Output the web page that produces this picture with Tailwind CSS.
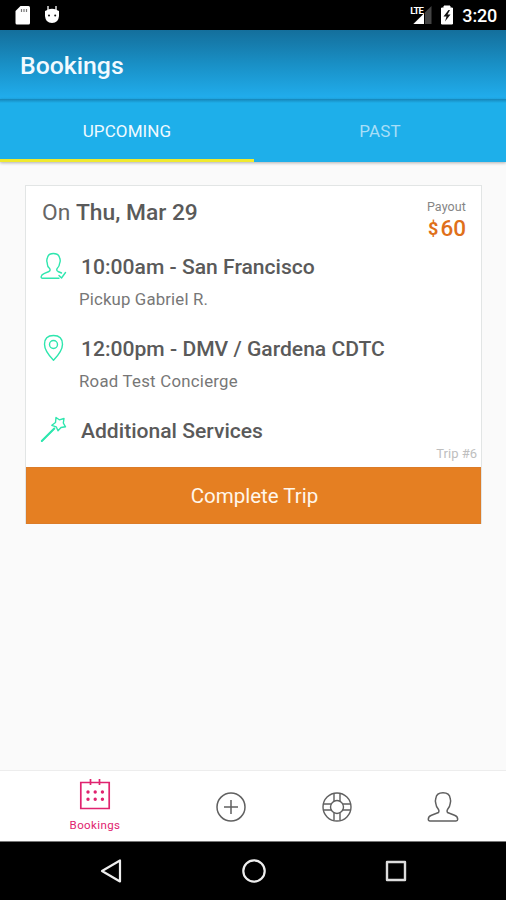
<!DOCTYPE html>
<html lang="en">
<head>
<meta charset="utf-8">
<title>Bookings</title>
<script src="https://cdn.jsdelivr.net/npm/@tailwindcss/browser@4"></script>
</head>
<body class="w-[506px] h-[900px] overflow-hidden bg-[#fafafa] font-[Roboto,sans-serif] flex flex-col whitespace-nowrap">
  <!-- Status bar -->
  <div class="h-[30px] shrink-0 bg-black flex items-center pl-[15px] pr-[9px] text-white">
    <svg class="w-4 h-5" viewBox="0 0 16 20"><path d="M5.500 1H13.500Q15 1 15 2.500V18Q15 19.500 13.500 19.500H2Q.5 19.500 .5 18V6Z" fill="#fff"/><path d="M6.500 4v3M9 4v3M11.500 4v3" stroke="#777" stroke-width="1.200"/></svg>
    <svg class="ml-[13px] w-4 h-5" viewBox="0 0 16 20"><path d="M4 1v5M12 1v5" stroke="#ddd" stroke-width="1.500"/><path d="M1 6Q3 5 4 4.500Q8 3 12 4.500Q13 5 15 6V11Q14.500 18 8 18Q1.500 18 1 11Z" fill="#fff"/><circle cx="5" cy="10.500" r="1" fill="#111"/><circle cx="11.200" cy="10.500" r="1" fill="#111"/></svg>
    <div class="ml-auto relative w-[24px] h-[20px]">
      <svg class="w-6 h-5" viewBox="0 0 24 20"><path d="M4 19 22.500 1V19Z" fill="#444"/><path d="M4.500 19 15.500 8V19Z" fill="#fff"/><path d="M15.500 7v12" stroke="#000"/></svg>
      <span class="absolute left-[1px] top-[1px] text-[9.5px] leading-[9px] font-bold tracking-[-0.9px]">LTE</span>
    </div>
    <svg class="ml-[7px] w-[14px] h-5" viewBox="0 0 14 20"><path d="M4 1h6v2h2.500v16h-11V3H4Z" fill="#fff" stroke="#fff" stroke-linejoin="round"/><path d="M8.500 5 3.500 11.500H6.500L5 16.500 10.500 9.500H7.500L10 5Z" fill="#111"/></svg>
    <span class="ml-[8px] pt-[2px] text-[18px] leading-[20px] font-medium tracking-[-0.2px]">3:20</span>
  </div>
  <!-- App bar -->
  <div class="h-[69px] shrink-0 bg-linear-to-b from-[#146f9c] via-[#1990c6] to-[#21aeee] flex items-center pl-[20px] pt-[3px]">
    <h1 class="text-[24.8px] leading-[28px] font-medium text-[#f2faff]">Bookings</h1>
  </div>
  <!-- Tabs -->
  <div class="relative h-[63px] shrink-0 bg-[#1eafea] flex text-[17px] shadow-[0_1px_3px_rgba(0,0,0,0.3)]">
    <div class="absolute inset-x-0 top-0 h-[4px] bg-linear-to-b from-[#1685b8] to-[#1eafea]"></div>
    <div class="w-[254px] h-full border-b-[3px] border-[#f0e92e] flex items-center justify-center pt-[6px] text-[#f0faff] tracking-[0.1px]">UPCOMING</div>
    <div class="w-[252px] h-full flex items-center justify-center pt-[3px] text-[#a7def7] tracking-[0.1px]">PAST</div>
  </div>
  <!-- Booking list -->
  <main class="flex-1 pt-[23px] px-[25px]">
    <section class="w-[457px] h-[339px] bg-white border border-b-0 border-[#e2e5e5] flex flex-col text-[#5a5a5a]">
      <div class="h-[56px] flex justify-between pl-[16px] pr-[15px]">
        <h2 class="pt-[13px] text-[22.8px] leading-[28px] text-[#666]">On <b class="font-medium text-[#5a5a5a]">Thu, Mar 29</b></h2>
        <div class="pt-[13px] text-right">
          <div class="text-[12.5px] leading-[15px] text-[#858585] tracking-[0.1px]">Payout</div>
          <div class="text-[22.5px] leading-[28px] text-[#df701a] font-medium"><span class="text-[18px] font-bold mr-[2px] relative -top-px">$</span>60</div>
        </div>
      </div>
      <div class="h-[82px] flex pl-[14px] pt-[10px]">
        <svg class="w-[27px] h-[28px] shrink-0" viewBox="0 0 27 28" fill="none" stroke="#2ee6ae" stroke-width="1.400" stroke-linecap="round" stroke-linejoin="round"><path d="M19 26.300H2.500Q1 26.300 1.200 24.500Q1.500 22.500 4.500 21.300L9 19.500Q10.600 18.500 9.800 16.800Q7 14.500 7.300 11Q6.300 9 7.200 6.500Q8 1.500 13.300 1.500Q19 1.500 19.800 6.500Q20.700 9 19.700 11Q19.500 14.500 17 16.800Q16.200 18.500 18 19.500L21.500 21M19 23.500 21.500 26 25.500 20.500"/></svg>
        <div class="pl-[12px]">
          <h3 class="pl-[2px] pt-px text-[21.1px] leading-[28px] font-medium">10:00am - San Francisco</h3>
          <p class="pt-[7px] text-[16.8px] tracking-[0.15px] leading-[22px] text-[#777]">Pickup Gabriel R.</p>
        </div>
      </div>
      <div class="h-[82px] flex pl-[14px] pt-[10px]">
        <svg class="w-[27px] h-[28px] shrink-0" viewBox="0 0 27 28" fill="none" stroke="#2ee6ae" stroke-width="1.400" stroke-linejoin="round"><path d="M13.500 26.300Q4.500 17 4.500 10.300Q4.500 1.500 13.500 1.500Q22.500 1.500 22.500 10.300Q22.500 17 13.500 26.300Z"/><circle cx="13.500" cy="10.500" r="4"/></svg>
        <div class="pl-[12px]">
          <h3 class="pl-[2px] pt-px text-[21.1px] leading-[28px] font-medium">12:00pm - DMV / Gardena CDTC</h3>
          <p class="pt-[7px] text-[16.8px] tracking-[0.25px] leading-[22px] text-[#777]">Road Test Concierge</p>
        </div>
      </div>
      <div class="h-[37px] flex pl-[14px] pt-[9px]">
        <svg class="w-[27px] h-[28px] shrink-0" viewBox="0 0 27 28" fill="none" stroke="#2ee6ae" stroke-width="1.400" stroke-linecap="round" stroke-linejoin="round"><path d="M1.800 26 14.300 13.500M16 2.500 19.300 4.800 24 3.500 23.300 8 25.500 11.800 21 12.500 18 15.800 16.200 11.800 11.800 10.300 15.500 7.500Z"/><path d="M1.800 26 14.300 13.500" stroke-width="2"/></svg>
        <h3 class="pl-[14px] pt-[2px] text-[21.1px] leading-[28px] font-medium">Additional Services</h3>
      </div>
      <div class="h-[24px] pr-[4px] pt-[3px] text-right text-[13px] leading-[16px] text-[#bebebe]">Trip #6</div>
      <button class="h-[57px] bg-[#e57f22] text-[#fff6ea] text-[20.5px] leading-[28px] pt-[1px] pl-[2px] border border-[#dc7c28]">Complete Trip</button>
    </section>
  </main>
  <!-- Bottom navigation -->
  <nav class="h-[71px] shrink-0 bg-white border-t border-[#ededed] flex">
    <div class="w-[190px] flex flex-col items-center pt-[6px] text-[#e0236f]">
      <svg class="w-8 h-9" viewBox="0 0 32 36" fill="none" stroke="#e0236f" stroke-width="1.700"><path d="M1.800 5.500H30.200V31.500H1.800Z"/><path d="M11.500 2v6M20.500 2v6"/><g stroke-width="3.400" stroke-linecap="round"><path d="M9 15h.01M16.200 15h.01M23.400 15h.01M9 22.300h.01M16.200 22.300h.01M23.400 22.300h.01"/></g></svg>
      <span class="mt-[5px] text-[11.5px] leading-[14px] tracking-[0.4px]">Bookings</span>
    </div>
    <div class="w-[82px] flex items-center justify-center pt-[2px]"><svg class="w-8 h-8" viewBox="0 0 32 32" fill="none" stroke="#606060" stroke-width="1.500"><circle cx="16" cy="16" r="14"/><path d="M16 9v14M9 16h14"/></svg></div>
    <div class="w-[130px] flex items-center justify-center pt-[2px]"><svg class="w-8 h-8" viewBox="0 0 32 32" fill="none" stroke="#606060" stroke-width="1.400"><circle cx="16" cy="16" r="14"/><circle cx="16" cy="16" r="6.500"/><path d="M13 2.500v8M19 2.500v8M13 21.500v8M19 21.500v8M2.500 13h8M2.500 19h8M21.500 13h8M21.500 19h8"/></svg></div>
    <div class="w-[82px] flex items-center justify-center pt-[2px]"><svg class="w-8 h-8" viewBox="0 0 32 32" fill="none" stroke="#606060" stroke-width="1.500" stroke-linejoin="round"><path d="M3 30Q1.300 30 1.300 28.300Q1.300 25.500 4.500 24.300L11.500 21.500Q12.500 20 11.500 18.500Q9 15.500 8.800 12.500Q8 9.500 8.800 7.500Q9.500 1.800 16 1.800Q22.500 1.800 23.200 7.500Q24 9.500 23.200 12.500Q23 15.500 20.500 18.500Q19.500 20 20.500 21.500L27.500 24.300Q30.700 25.500 30.700 28.300Q30.700 30 29 30Z"/></svg></div>
  </nav>
  <!-- System navigation -->
  <div class="h-[59px] shrink-0 bg-black border-t border-[#777] flex items-center pl-[99px] pr-[98px] justify-between">
    <svg class="w-6 h-7" viewBox="0 0 24 28" fill="none" stroke="#eee" stroke-width="2.200" stroke-linejoin="round"><path d="M21 3.500V24.500L3 14Z"/></svg>
    <svg class="w-7 h-7" viewBox="0 0 28 28" fill="none" stroke="#eee" stroke-width="2.200"><circle cx="14" cy="14" r="10.700"/></svg>
    <svg class="w-6 h-6" viewBox="0 0 24 24" fill="none" stroke="#ddd" stroke-width="2.400" stroke-linejoin="round"><path d="M3 3H21V21H3Z"/></svg>
  </div>
</body>
</html>
